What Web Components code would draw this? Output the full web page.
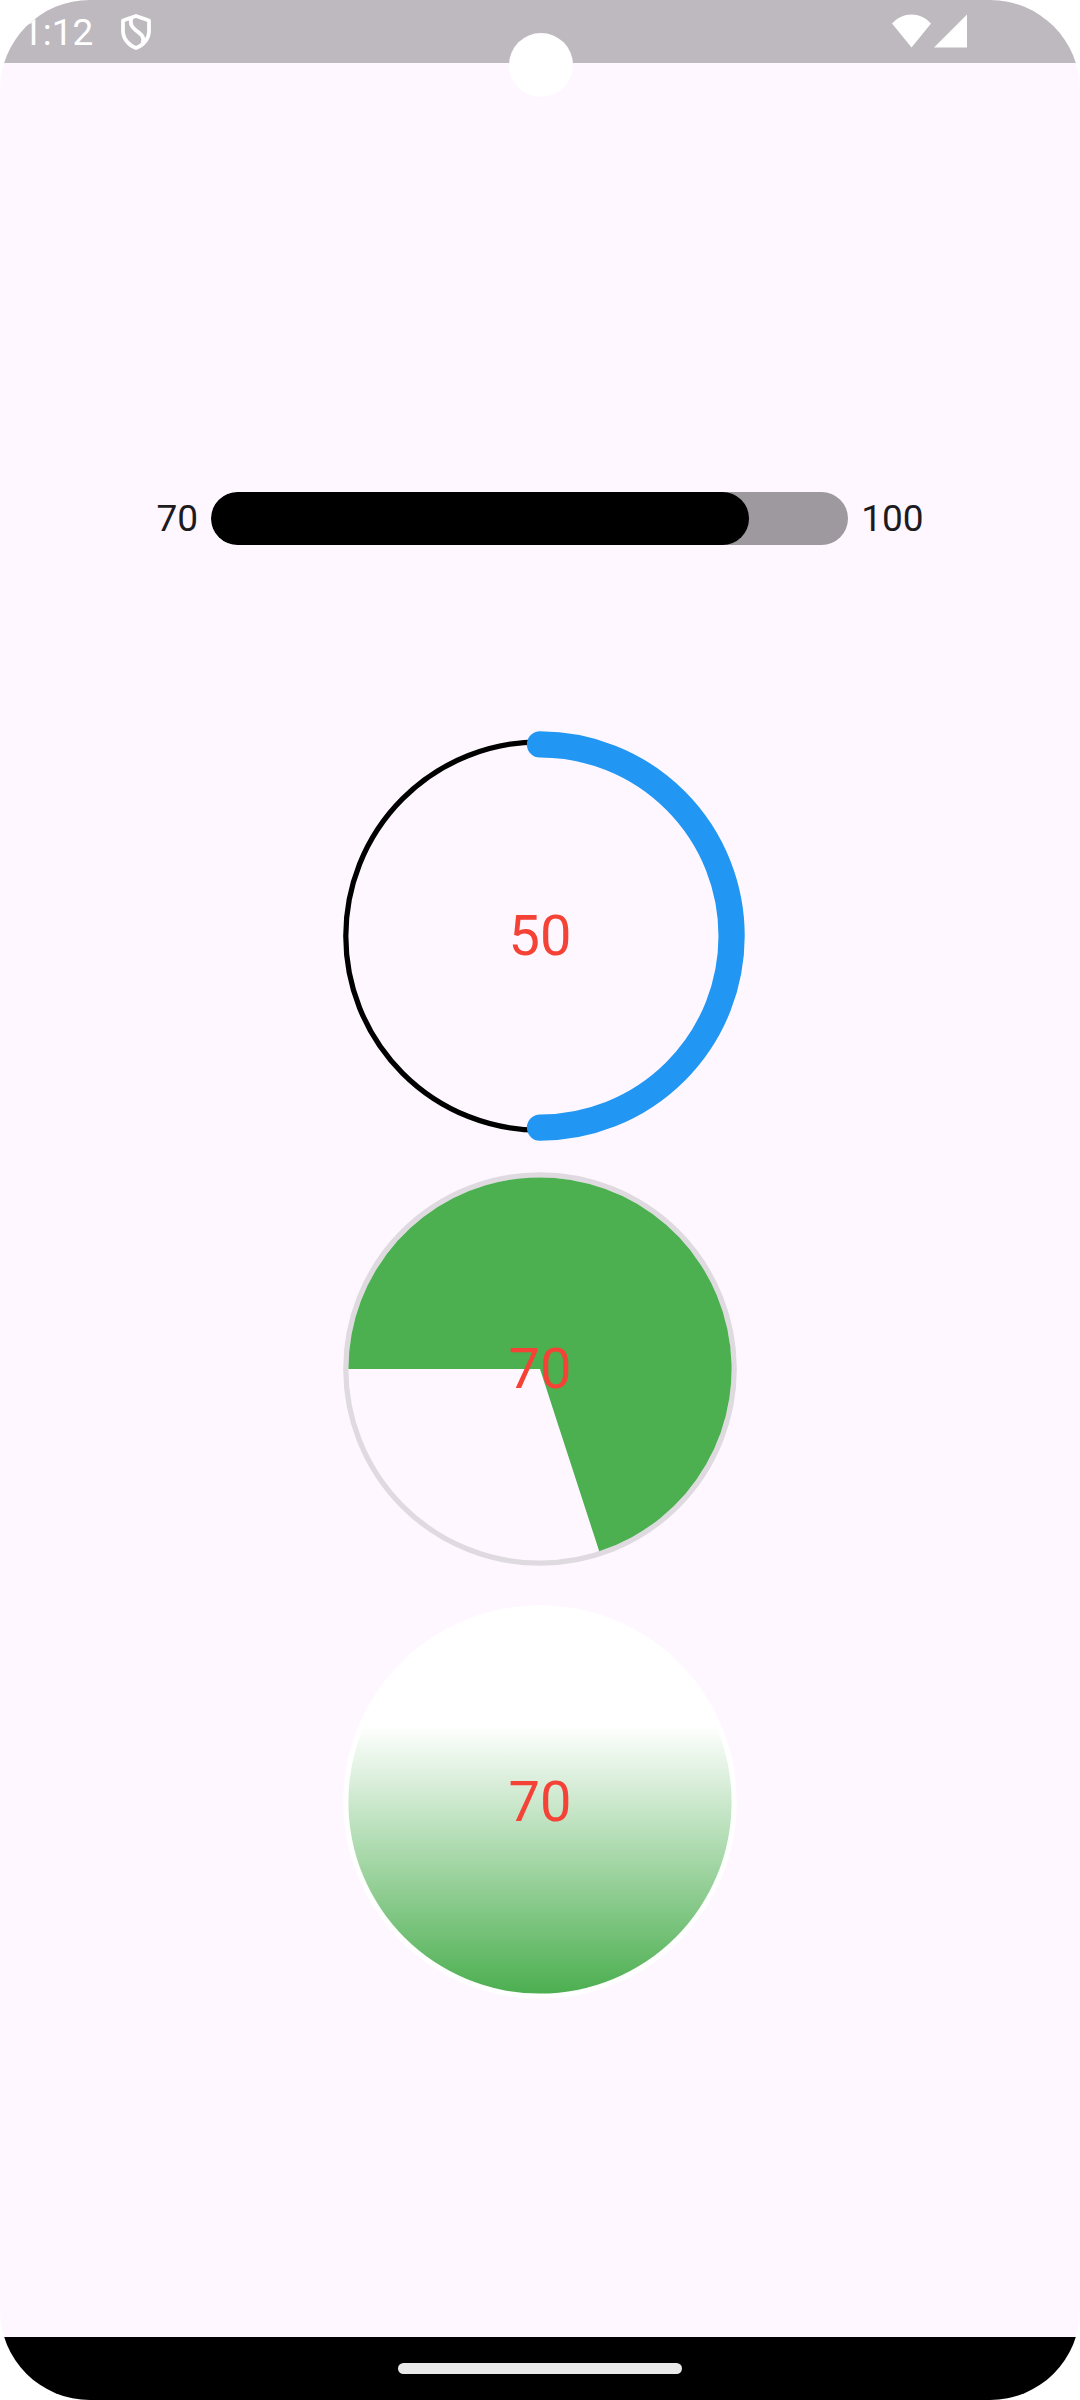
<!DOCTYPE html>
<html lang="en">
<head>
<meta charset="utf-8">
<meta name="viewport" content="width=device-width, initial-scale=1">
<title>Progress indicators</title>
<style>
  html { background: #fff; }
  body { margin: 0; font-family: Roboto, sans-serif; color: #1d1b20; }
</style>
</head>
<body>
<device-screen>
  <status-bar slot="top">1:12</status-bar>
  <linear-meter value="84.5" label="Linear progress"><span slot="start">70</span><span slot="end">100</span></linear-meter>
  <meter-stack>
    <circle-meter kind="ring" value="50">50</circle-meter>
    <circle-meter kind="pie" value="70">70</circle-meter>
    <circle-meter kind="fill" value="70">70</circle-meter>
  </meter-stack>
  <nav-bar slot="bottom"></nav-bar>
</device-screen>

<script>
const define = (name, render) => customElements.define(name, class extends HTMLElement {
  constructor() {
    super();
    this.attachShadow({ mode: 'open' });
  }
  connectedCallback() {
    this.shadowRoot.innerHTML = render(this);
  }
});

define('device-screen', () => `
  <style>
    :host { display: flex; flex-direction: column; position: relative; min-height: 100vh;
            background: #fef7ff; border-radius: 90px; overflow: hidden; }
    main { flex: 1; display: flex; flex-direction: column; align-items: stretch;
           gap: 194px; padding: 429px 0 40px; box-sizing: border-box; }
    .camera { position: absolute; top: 33px; left: 50%; width: 64px; height: 64px;
              margin-left: -31px; border-radius: 50%; background: #fff; }
  </style>
  <slot name="top"></slot>
  <main><slot></slot></main>
  <slot name="bottom"></slot>
  <div class="camera"></div>`);

define('status-bar', () => `
  <style>
    :host { display: flex; align-items: center; justify-content: space-between; height: 63px;
            padding: 0 113px 0 22px; box-sizing: border-box; background: #beb8bf; color: #fff;
            font-size: 37px; line-height: 44px; }
    div { display: flex; align-items: center; }
    .left { gap: 28px; }
    .left span { padding-top: 2px; }
    .right { gap: 3px; padding-bottom: 2px; }
    svg { display: block; }
  </style>
  <div class="left">
    <span><slot></slot></span>
    <svg width="30" height="36" viewBox="0 0 30 36" fill="none" stroke="#fff" stroke-width="3.8" stroke-linejoin="round" aria-hidden="true">
      <path d="M15 2 L28 6.5 V17 C28 25 22 31.5 15 34 C8 31.5 2 25 2 17 V6.5 Z"/>
      <path d="M10.5 4 C8.5 9 10 12.500 14.500 16 C20 20.500 24 22.500 21.500 29"/>
    </svg>
  </div>
  <div class="right">
    <svg width="39" height="34" viewBox="0 0 39 34" fill="#fff" aria-hidden="true"><path d="M19.500 33.500 L0 9.500 C11 -2.500 28 -2.500 39 9.500 Z"/></svg>
    <svg width="33" height="34" viewBox="0 0 33 34" fill="#fff" aria-hidden="true"><path d="M33 0.500 V33.500 H0 Z"/></svg>
  </div>`);

define('linear-meter', el => `
  <style>
    :host { display: flex; align-items: center; justify-content: center; gap: 13px;
            font-size: 37px; line-height: 53px; }
    .track { flex: 0 0 59%; height: 53px; border-radius: 27px; overflow: hidden; background: #9e999e; }
    .bar { width: ${el.getAttribute('value')}%; height: 100%; border-radius: 27px; background: #000; }
  </style>
  <slot name="start"></slot>
  <div class="track" role="progressbar" aria-label="${el.getAttribute('label')}" aria-valuenow="70"><div class="bar"></div></div>
  <slot name="end"></slot>`);

define('meter-stack', () => `
  <style>
    :host { display: flex; flex-direction: column; align-items: center; gap: 39px; }
  </style>
  <slot></slot>`);

const R = 191.6;
const point = deg => {
  const a = deg * Math.PI / 180;
  return `${(197 + R * Math.cos(a)).toFixed(2)} ${(197 + R * Math.sin(a)).toFixed(2)}`;
};
const arc = (from, sweep) => `${point(from)} A${R} ${R} 0 ${sweep > 180 ? 1 : 0} 1 ${point(from + sweep)}`;

const shapes = {
  ring: v => `
    <circle cx="197" cy="197" r="194.2" fill="none" stroke="#000" stroke-width="5.25"/>
    <path d="M${arc(-90, v * 3.6)}" fill="none" stroke="#2196f3" stroke-width="26.25" stroke-linecap="round"/>`,
  pie: v => `
    <circle cx="197" cy="197" r="194.2" fill="none" stroke="#dfdae0" stroke-width="5.25"/>
    <path d="M197 197 L${arc(180, v * 3.6)} Z" fill="#4caf50"/>`,
  fill: v => `
    <defs><linearGradient id="g" x1="0" y1="0" x2="0" y2="1">
      <stop offset="${100 - v}%" stop-color="#fff"/><stop offset="100%" stop-color="#4caf50"/>
    </linearGradient></defs>
    <circle cx="197" cy="197" r="196.8" fill="#fff"/>
    <circle cx="197" cy="197" r="${R}" fill="url(#g)"/>`
};

define('circle-meter', el => {
  const value = Number(el.getAttribute('value'));
  return `
  <style>
    :host { display: grid; place-items: center; width: 394px; height: 394px;
            font-size: 56px; line-height: 66px; color: #f44336; }
    svg, span { grid-area: 1 / 1; }
    svg { display: block; overflow: visible; }
    span { z-index: 1; }
  </style>
  <svg width="394" height="394" viewBox="0 0 394 394" aria-hidden="true">${shapes[el.getAttribute('kind')](value)}</svg>
  <span><slot></slot></span>`;
});

define('nav-bar', () => `
  <style>
    :host { display: flex; align-items: center; justify-content: center; height: 63px; background: #000; }
    div { width: 284px; height: 11px; border-radius: 6px; background: #e9e9e9; }
  </style>
  <div></div>`);
</script>
</body>
</html>
